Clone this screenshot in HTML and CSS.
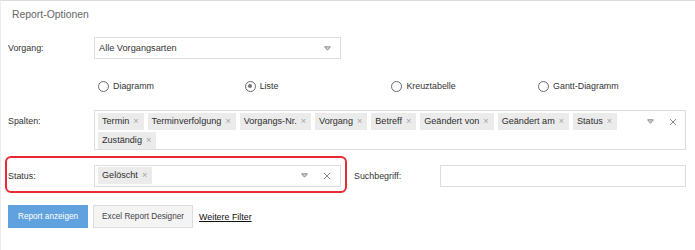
FILE: index.html
```html
<!DOCTYPE html>
<html lang="de">
<head>
  <meta charset="UTF-8">
  <title>Report-Optionen</title>
  <link rel="stylesheet" href="styles.css">
</head>
<body>
<div class="panel">
  <div class="panel-title">Report-Optionen</div>

  <div class="form">
    <!-- Vorgang -->
    <div class="row">
      <label class="lbl">Vorgang:</label>
      <div class="select">
        <span class="select-text">Alle Vorgangsarten</span>
        <svg class="caret" width="7" height="5" viewBox="0 0 7 5"><path d="M0.6 0.8 H6.4 L3.5 4.2 Z" fill="#d8d8d8" stroke="#8a8a8a" stroke-width="1"/></svg>
      </div>
    </div>

    <!-- Darstellung -->
    <div class="radios">
      <label class="radio"><span class="dot"></span>Diagramm</label>
      <label class="radio"><span class="dot checked"></span>Liste</label>
      <label class="radio"><span class="dot"></span>Kreuztabelle</label>
      <label class="radio"><span class="dot"></span>Gantt-Diagramm</label>
    </div>

    <!-- Spalten -->
    <div class="row">
      <label class="lbl">Spalten:</label>
      <div class="multi">
        <div class="tags">
          <span class="tag">Termin<i>×</i></span>
          <span class="tag">Terminverfolgung<i>×</i></span>
          <span class="tag">Vorgangs-Nr.<i>×</i></span>
          <span class="tag">Vorgang<i>×</i></span>
          <span class="tag">Betreff<i>×</i></span>
          <span class="tag">Geändert von<i>×</i></span>
          <span class="tag">Geändert am<i>×</i></span>
          <span class="tag">Status<i>×</i></span>
          <span class="tag">Zuständig<i>×</i></span>
        </div>
        <div class="multi-icons">
          <svg class="caret" width="7" height="5" viewBox="0 0 7 5"><path d="M0.6 0.8 H6.4 L3.5 4.2 Z" fill="#d8d8d8" stroke="#8a8a8a" stroke-width="1"/></svg>
          <svg class="clear" width="8" height="8" viewBox="0 0 8 8"><path d="M1 1 L7 7 M7 1 L1 7" stroke="#8a8a8a" stroke-width="1"/></svg>
        </div>
      </div>
    </div>

    <!-- Status / Suchbegriff -->
    <div class="status-row">
      <div class="highlight">
        <label class="lbl">Status:</label>
        <div class="multi multi-small">
          <div class="tags">
            <span class="tag">Gelöscht<i>×</i></span>
          </div>
          <div class="multi-icons">
            <svg class="caret" width="7" height="5" viewBox="0 0 7 5"><path d="M0.6 0.8 H6.4 L3.5 4.2 Z" fill="#d8d8d8" stroke="#8a8a8a" stroke-width="1"/></svg>
            <svg class="clear" width="8" height="8" viewBox="0 0 8 8"><path d="M1 1 L7 7 M7 1 L1 7" stroke="#8a8a8a" stroke-width="1"/></svg>
          </div>
        </div>
      </div>
      <div class="search">
        <label class="lbl">Suchbegriff:</label>
        <div class="input"></div>
      </div>
    </div>

    <!-- Aktionen -->
    <div class="actions">
      <button class="btn btn-primary">Report anzeigen</button>
      <button class="btn">Excel Report Designer</button>
      <a class="link" href="#">Weitere Filter</a>
    </div>
  </div>
</div>
</body>
</html>
```

FILE: styles.css
```css
body {
  margin: 0;
  background: #fff;
  font-family: "Liberation Sans", Arial, sans-serif;
  font-size: 8.9px;
  color: #333;
}

.panel {
  border-top: 1px solid #dcdcdc;
  border-left: 1px solid #ececec;
  height: 249px;
}

.panel-title {
  padding: 7px 11px;
  font-size: 10.4px;
  line-height: 14px;
  color: #666;
}

.form {
  padding: 8px 9px 0 7px;
}

.row {
  display: flex;
  align-items: flex-start;
}

.lbl {
  width: 86px;
  flex: none;
  line-height: 23px;
}

/* Auswahlfeld */
.select {
  width: 247px;
  height: 22px;
  box-sizing: border-box;
  border: 1px solid #ddd;
  display: flex;
  align-items: center;
  justify-content: space-between;
  padding: 0 9px 0 4px;
  font-size: 9.2px;
}

.caret {
  display: block;
}

/* Radios */
.radios {
  display: grid;
  grid-template-columns: repeat(4, 146.7px);
  margin: 20px 0 18px 90px;
  line-height: 12px;
}

.radio {
  display: flex;
  align-items: center;
  gap: 4px;
}

.dot {
  width: 11px;
  height: 11px;
  box-sizing: border-box;
  border: 1px solid #6a6a6a;
  border-radius: 50%;
  display: flex;
  align-items: center;
  justify-content: center;
}

.dot.checked::after {
  content: "";
  width: 4px;
  height: 4px;
  border-radius: 50%;
  background: #777;
}

/* Mehrfachauswahl */
.multi {
  flex: 1;
  display: flex;
  align-items: flex-start;
  border: 1px solid #ddd;
  padding: 2px 8px 0 3px;
  min-height: 40px;
  box-sizing: border-box;
}

.tags {
  flex: 1;
  display: flex;
  flex-wrap: wrap;
  gap: 2px 4px;
}

.tag {
  background: #ebebeb;
  height: 17px;
  line-height: 17px;
  padding: 0 5px 0 4px;
  font-size: 9.1px;
  color: #2e2e2e;
  white-space: nowrap;
}

.tag i {
  font-style: normal;
  color: #a0a0a0;
  margin-left: 4px;
}

.multi-icons {
  display: flex;
  align-items: center;
  gap: 15px;
  height: 17px;
}

.multi-small {
  flex: none;
  width: 247px;
  min-height: 22px;
  height: 22px;
  padding: 1px 9px 0 3px;
}

/* Status-Zeile */
.status-row {
  display: flex;
  align-items: flex-start;
  margin-top: 6px;
}

.highlight {
  display: flex;
  align-items: flex-start;
  border: 2px solid #ea2a33;
  border-radius: 6px;
  padding: 7px 4px 3px 1px;
  margin-left: -3px;
}

.search {
  display: flex;
  align-items: flex-start;
  flex: 1;
  margin: 9px 0 0 7px;
}

.input {
  flex: 1;
  height: 22px;
  box-sizing: border-box;
  border: 1px solid #ddd;
}

/* Buttons */
.actions {
  display: flex;
  align-items: center;
  margin-top: 12px;
}

.btn {
  font-family: inherit;
  font-size: 8.2px;
  height: 23px;
  border: 1px solid #ddd;
  background: #f4f4f4;
  color: #444;
  padding: 0 8px;
  margin-right: 5px;
}

.btn-primary {
  background: #60a2dd;
  border-color: #60a2dd;
  color: #fff;
  padding: 0 9px;
}

.link {
  color: #111;
  text-decoration: underline;
  margin-left: 1px;
}
```
